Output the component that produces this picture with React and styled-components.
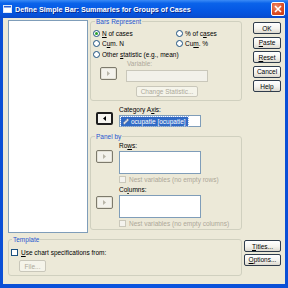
import React from 'react';
import styled, { createGlobalStyle } from 'styled-components';

const Global = createGlobalStyle`
  html, body { margin: 0; padding: 0; width: 288px; height: 288px; overflow: hidden; background: #ECE9D8; }
  #root { width: 288px; height: 288px; }
`;

const Window = styled.div`
  width: 288px;
  height: 288px;
  box-sizing: border-box;
  display: flex;
  flex-direction: column;
  background: linear-gradient(90deg, #0A4FD6, #0B55E0 50%, #0A4FD6);
  font-family: "Liberation Sans", Arial, sans-serif;
  font-size: 6.5px;
  color: #000;
`;

const TitleBar = styled.div`
  height: 18px;
  flex: none;
  display: flex;
  align-items: center;
  gap: 3px;
  padding: 0 3px 0 3px;
  background: linear-gradient(180deg, #3B8BF6 0%, #0A63EA 18%, #0558E4 55%, #0650D8 85%, #0A49C8 100%);
  color: #fff;
  font-weight: bold;
  font-size: 7.2px;
  text-shadow: 1px 1px 0 #0A2A8A;
`;

const TitleText = styled.span`
  flex: 1;
  white-space: nowrap;
`;

const CloseBtn = styled.div`
  width: 14px;
  height: 14px;
  box-sizing: border-box;
  border: 1px solid #fff;
  border-radius: 2px;
  background: radial-gradient(circle at 35% 30%, #F08A6A, #DA4A22 60%, #C23A15);
  display: flex;
  align-items: center;
  justify-content: center;
`;

const Body = styled.div`
  flex: 1;
  margin: 0 3px 4px;
  background: #ECE9D8;
  display: grid;
  grid-template-columns: 80px 152px 38px;
  grid-template-rows: 215px auto;
  column-gap: 2px;
  padding-left: 5px;
  align-items: start;
`;

const ListBox = styled.div`
  margin-top: ${p => p.$mt ?? 0}px;
  width: ${p => p.$w}px;
  height: ${p => p.$h}px;
  box-sizing: border-box;
  border: 1px solid #7F9DB9;
  background: #fff;
`;

const MiddleCol = styled.div`
  display: flex;
  flex-direction: column;
`;

const Group = styled.fieldset`
  margin: ${p => p.$mt ?? 0}px 0 0;
  padding: 0 0 ${p => p.$pb}px;
  border: 1px solid #D0D0BF;
  border-radius: 3px;
  min-width: 0;
  display: flex;
  flex-direction: column;
  align-items: flex-start;
  ${p => p.$span && 'grid-column: 1 / span 2;'}
`;

const Legend = styled.legend`
  padding: 0 1px;
  margin-left: ${p => p.$indent}px;
  color: #1F55D0;
  line-height: 7px;
  font-size: 6.5px;
`;

const RadioGrid = styled.div`
  display: grid;
  grid-template-columns: 83px auto;
  grid-auto-rows: 10.5px;
  margin: 3px 0 0 2px;
`;

const Option = styled.label`
  display: flex;
  align-items: center;
  gap: 2px;
  white-space: nowrap;
  line-height: 7px;
  grid-column: ${p => p.$col ?? 'auto'};
  color: ${p => (p.$disabled ? '#ACA899' : '#000')};
`;

const Radio = styled.span`
  width: 7px;
  height: 7px;
  box-sizing: border-box;
  border-radius: 50%;
  border: 1px solid #1C5180;
  background: #fff;
  display: flex;
  align-items: center;
  justify-content: center;
  flex: none;
  &::after {
    content: '';
    width: 3px;
    height: 3px;
    border-radius: 50%;
    background: ${p => (p.$checked ? '#2AA12A' : 'transparent')};
  }
`;

const Check = styled.span`
  width: 7px;
  height: 7px;
  box-sizing: border-box;
  border: 1px solid ${p => (p.$disabled ? '#CAC8BB' : '#1C5180')};
  background: ${p => (p.$disabled ? '#F4F3EE' : '#fff')};
  flex: none;
`;

const Mn = styled.span`
  text-decoration: underline;
`;

const FieldRow = styled.div`
  display: flex;
  align-items: ${p => p.$align || 'flex-start'};
  padding-left: ${p => p.$pl}px;
  margin-top: ${p => p.$mt ?? 0}px;
`;

const FieldCol = styled.div`
  display: flex;
  flex-direction: column;
  align-items: flex-start;
  margin-left: ${p => p.$ml}px;
`;

const Label = styled.div`
  line-height: 7px;
  white-space: nowrap;
  margin-left: ${p => p.$ml ?? 0}px;
  color: ${p => (p.$disabled ? '#ACA899' : '#000')};
`;

const ArrowBtn = styled.div`
  width: 17px;
  height: 13px;
  box-sizing: border-box;
  flex: none;
  display: flex;
  align-items: center;
  justify-content: center;
  margin-top: ${p => p.$mt ?? 0}px;
  margin-bottom: ${p => p.$mb ?? 0}px;
  border-radius: 2px;
  border: ${p => (p.$active ? '2px solid #1E1E1E' : '1px solid #7D7A6C')};
  background: ${p => (p.$active ? '#F6F5F0' : '#F3F2EC')};
  box-shadow: ${p => (p.$active ? 'none' : 'inset 0 0 0 1px #E4E2D6')};
`;

const TextBox = styled.div`
  width: 82px;
  height: 12px;
  box-sizing: border-box;
  margin-top: ${p => p.$mt ?? 0}px;
  border: 1px solid ${p => (p.$disabled ? '#C9C7BA' : '#7F9DB9')};
  background: ${p => (p.$disabled ? '#F2F1EA' : '#fff')};
  display: flex;
  align-items: center;
  padding-left: 1px;
`;

const Selected = styled.span`
  display: flex;
  align-items: center;
  gap: 1px;
  height: 9px;
  padding: 0 2px 0 1px;
  background: #316AC5;
  color: #fff;
  white-space: nowrap;
  line-height: 9px;
  outline: 1px dotted #9BB5E3;
`;

const Btn = styled.div`
  width: ${p => p.$w}px;
  height: ${p => p.$h ?? 12}px;
  box-sizing: border-box;
  flex: none;
  margin-top: ${p => p.$mt ?? 0}px;
  margin-left: ${p => p.$ml ?? 0}px;
  align-self: ${p => p.$self || 'auto'};
  border-radius: 2px;
  border: 1px solid ${p => (p.$disabled ? '#C9C7BA' : '#2F3C4C')};
  background: ${p =>
    p.$disabled ? '#F5F4EA' : 'linear-gradient(180deg, #FFFFFF 0%, #F4F3EE 55%, #DEDACF 100%)'};
  color: ${p => (p.$disabled ? '#ACA899' : '#000')};
  display: flex;
  align-items: center;
  justify-content: center;
  white-space: nowrap;
  line-height: 7px;
`;

const RightCol = styled.div`
  display: flex;
  flex-direction: column;
  align-items: flex-end;
  padding: ${p => p.$pt}px 1px 0 0;
  gap: ${p => p.$gap}px;
`;

const CheckRow = styled.label`
  display: flex;
  align-items: center;
  gap: ${p => p.$gap ?? 3}px;
  margin: ${p => p.$mt ?? 0}px 0 0 ${p => p.$ml ?? 0}px;
  line-height: 7px;
  white-space: nowrap;
  color: ${p => (p.$disabled ? '#ACA899' : '#000')};
`;

const Tri = ({ dir, color }) => (
  <svg width="3" height="5" viewBox="0 0 3 5">
    <polygon points={dir === 'left' ? '3,0 3,5 0,2.5' : '0,0 0,5 3,2.5'} fill={color} />
  </svg>
);

const AppIcon = () => (
  <svg width="9" height="8" viewBox="0 0 9 8">
    <rect x="0.5" y="0.5" width="8" height="7" fill="#fff" stroke="#DDE8FA" />
    <rect x="1" y="1" width="7" height="1.5" fill="#2A5FD4" />
  </svg>
);

const ScaleIcon = () => (
  <svg width="8" height="8" viewBox="0 0 8 8">
    <polygon points="1,6 5.5,1.5 7,3 2.5,7.5" fill="#D9DCE6" stroke="#6E7C9A" strokeWidth="0.6" />
    <line x1="3" y1="4.5" x2="4" y2="5.5" stroke="#6E7C9A" strokeWidth="0.5" />
    <line x1="4.3" y1="3.2" x2="5.3" y2="4.2" stroke="#6E7C9A" strokeWidth="0.5" />
  </svg>
);

export default function App() {
  return (
    <>
      <Global />
      <Window>
        <TitleBar>
          <AppIcon />
          <TitleText>Define Simple Bar: Summaries for Groups of Cases</TitleText>
          <CloseBtn>
            <svg width="8" height="8" viewBox="0 0 8 8">
              <path d="M1 1 L7 7 M7 1 L1 7" stroke="#fff" strokeWidth="1.6" />
            </svg>
          </CloseBtn>
        </TitleBar>
        <Body>
          <ListBox $mt={2} $w={80} $h={213} />

          <MiddleCol>
            <Group $pb={3}>
              <Legend $indent={4}>Bars Represent</Legend>
              <RadioGrid>
                <Option><Radio $checked /><span><Mn>N</Mn> of cases</span></Option>
                <Option><Radio /><span>% of c<Mn>a</Mn>ses</span></Option>
                <Option><Radio /><span>C<Mn>u</Mn>m. N</span></Option>
                <Option><Radio /><span>Cu<Mn>m</Mn>. %</span></Option>
                <Option $col="1 / span 2"><Radio /><span>Other <Mn>s</Mn>tatistic (e.g., mean)</span></Option>
              </RadioGrid>
              <FieldRow $pl={9}>
                <ArrowBtn $mt={7.5}><Tri dir="right" color="#B8B5A8" /></ArrowBtn>
                <FieldCol $ml={9}>
                  <Label $disabled $ml={1}>Variable:</Label>
                  <TextBox $disabled $mt={3.5} />
                  <Btn $disabled $w={62} $h={11} $mt={4} $self="center">Change Statistic...</Btn>
                </FieldCol>
              </FieldRow>
            </Group>

            <FieldRow $pl={6} $mt={5} $align="flex-end">
              <ArrowBtn $active $mb={2}><Tri dir="left" color="#000" /></ArrowBtn>
              <FieldCol $ml={6}>
                <Label>Category A<Mn>x</Mn>is:</Label>
                <TextBox $mt={2}>
                  <Selected><ScaleIcon />ocupatie [ocupatie]</Selected>
                </TextBox>
              </FieldCol>
            </FieldRow>

            <Group $mt={6} $pb={2}>
              <Legend $indent={4}>Panel by</Legend>
              <FieldRow $pl={5} $mt={2}>
                <ArrowBtn $mt={8}><Tri dir="right" color="#B8B5A8" /></ArrowBtn>
                <FieldCol $ml={6}>
                  <Label>Ro<Mn>w</Mn>s:</Label>
                  <ListBox $mt={2} $w={82} $h={23} />
                  <CheckRow $disabled $mt={2}><Check $disabled />Nest variables (no empty rows)</CheckRow>
                </FieldCol>
              </FieldRow>
              <FieldRow $pl={5} $mt={3}>
                <ArrowBtn $mt={10}><Tri dir="right" color="#B8B5A8" /></ArrowBtn>
                <FieldCol $ml={6}>
                  <Label>Co<Mn>l</Mn>umns:</Label>
                  <ListBox $mt={2} $w={82} $h={23} />
                  <CheckRow $disabled $mt={2}><Check $disabled />Nest variables (no empty columns)</CheckRow>
                </FieldCol>
              </FieldRow>
            </Group>
          </MiddleCol>

          <RightCol $pt={4} $gap={2.5}>
            <Btn $w={28}>OK</Btn>
            <Btn $w={28}><Mn>P</Mn>aste</Btn>
            <Btn $w={28}><Mn>R</Mn>eset</Btn>
            <Btn $w={28}>Cancel</Btn>
            <Btn $w={28}>Help</Btn>
          </RightCol>

          <Group $span $mt={3} $pb={3}>
            <Legend $indent={3}>Template</Legend>
            <CheckRow $mt={6} $ml={2}><Check /><span><Mn>U</Mn>se chart specifications from:</span></CheckRow>
            <Btn $disabled $w={27} $mt={4} $ml={10}>File...</Btn>
          </Group>

          <RightCol $pt={7} $gap={1.5}>
            <Btn $w={37}><Mn>T</Mn>itles...</Btn>
            <Btn $w={37}><Mn>O</Mn>ptions...</Btn>
          </RightCol>
        </Body>
      </Window>
    </>
  );
}
